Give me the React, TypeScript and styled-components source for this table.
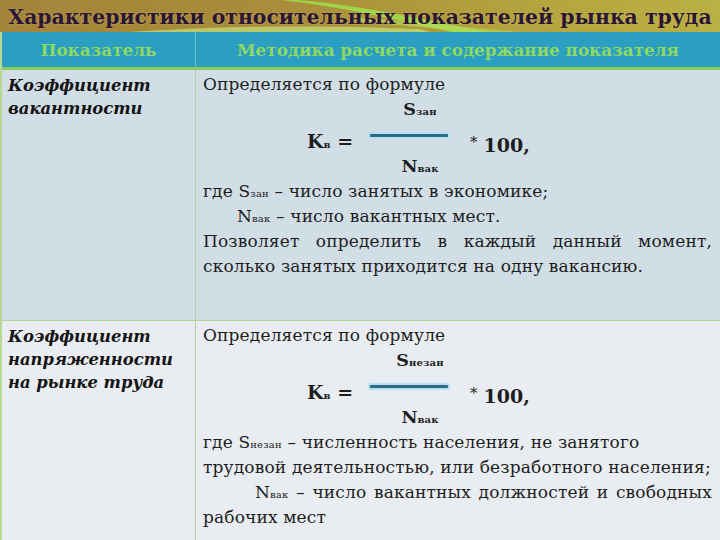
import React from 'react';
import styled, { createGlobalStyle } from 'styled-components';

const GlobalStyle = createGlobalStyle`
  html, body {
    margin: 0;
    padding: 0;
  }
  body {
    width: 720px;
    height: 540px;
    overflow: hidden;
    background: #e9edf1;
  }
`;

const Slide = styled.div`
  width: 720px;
  height: 540px;
  display: flex;
  flex-direction: column;
  font-family: "DejaVu Serif", "Liberation Serif", serif;
  color: #1d1d1d;
`;

const TitleBar = styled.div`
  position: relative;
  flex: none;
  height: 32px;
  display: flex;
  align-items: center;
  justify-content: center;
  overflow: hidden;
  background: linear-gradient(90deg, #a4843a 0%, #aa8d3b 40%, #b3a23d 70%, #bab043 100%);
`;

const Swoosh = styled.svg`
  position: absolute;
  left: 0;
  top: 0;
`;

const Title = styled.h1`
  position: relative;
  margin: 0;
  padding-top: 2px;
  font-size: 20.4px;
  font-weight: bold;
  white-space: nowrap;
  color: #2a1532;
  text-shadow: 0 0 2px rgba(240, 220, 150, 0.5);
`;

const Table = styled.div`
  flex: 1;
  display: flex;
  flex-direction: column;
  border-left: 2px solid #b7da8e;
`;

const HeaderRow = styled.div`
  flex: none;
  height: 38px;
  box-sizing: border-box;
  display: grid;
  grid-template-columns: 193px 1fr;
  background: #2a9fc2;
  border-bottom: 3px solid #8ccb5c;
`;

const HeadCell = styled.div`
  display: flex;
  align-items: center;
  justify-content: center;
  font-size: 16.8px;
  font-weight: bold;
  color: #8fd862;
  white-space: nowrap;
  & + & {
    border-left: 1px solid #6cc0d4;
  }
`;

const Row = styled.div<{ $bg: string; $height?: number }>`
  display: grid;
  grid-template-columns: 193px 1fr;
  box-sizing: border-box;
  background: ${(p) => p.$bg};
  ${(p) => (p.$height ? `height: ${p.$height}px; flex: none;` : 'flex: 1;')}
  border-bottom: 1px solid #b3d58f;
  &:last-child {
    border-bottom: none;
  }
`;

const NameCell = styled.div`
  padding: 4px 6px;
  font-size: 16.4px;
  line-height: 23px;
  font-weight: bold;
  font-style: italic;
  color: #141414;
`;

const TextCell = styled.div`
  padding: 2px 8px 0 7px;
  border-left: 1px solid #b9cfaa;
  font-size: 17px;
  letter-spacing: 0.15px;
  line-height: 25px;
`;

const Line = styled.div<{ $indent?: number; $justify?: boolean }>`
  height: 25px;
  padding-left: ${(p) => p.$indent ?? 0}px;
  text-align: ${(p) => (p.$justify ? 'justify' : 'left')};
  text-align-last: ${(p) => (p.$justify ? 'justify' : 'auto')};
  white-space: ${(p) => (p.$justify ? 'normal' : 'nowrap')};
`;

const Small = styled.span`
  font-size: 10px;
  line-height: 1;
  letter-spacing: 0.2px;
`;

const Formula = styled.div`
  display: flex;
  align-items: center;
  margin-left: 104px;
  font-weight: bold;
  letter-spacing: 0;
`;

const Lhs = styled.div`
  width: 63px;
  font-size: 19px;
  white-space: nowrap;
  padding-top: 6px;
`;

const Fraction = styled.div`
  width: 100px;
  display: flex;
  flex-direction: column;
`;

const Term = styled.div`
  height: 25px;
  text-align: center;
  font-size: 17.5px;
  white-space: nowrap;
`;

const RuleBox = styled.div`
  height: 32px;
  display: flex;
  align-items: flex-start;
  padding-top: 12px;
  box-sizing: border-box;
`;

const Rule = styled.div`
  width: 78px;
  height: 3px;
  background: #2d6c84;
  box-shadow: 0 0 1px 2px #b5e0f0;
  border-radius: 1px;
`;

const Rhs = styled.div`
  font-size: 19px;
  white-space: nowrap;
  padding-top: 12px;
  sup {
    font-size: 15px;
    font-weight: normal;
    vertical-align: 5px;
    margin-right: 6px;
  }
`;

function KFormula({ top }: { top: React.ReactNode }) {
  return (
    <Formula>
      <Lhs>
        K<Small>в</Small> =
      </Lhs>
      <Fraction>
        <Term>{top}</Term>
        <RuleBox>
          <Rule />
        </RuleBox>
        <Term>
          N<Small>вак</Small>
        </Term>
      </Fraction>
      <Rhs>
        <sup>*</sup>100,
      </Rhs>
    </Formula>
  );
}

export default function App() {
  return (
    <>
      <GlobalStyle />
      <Slide>
        <TitleBar>
          <Swoosh width="720" height="32" viewBox="0 0 720 32">
            <path d="M296 0 C350 4 410 16 486 32 L452 32 C398 20 344 7 282 0 Z" fill="#9fe04c" opacity="0.85" />
            <path d="M130 32 C210 27 300 24 420 29 L430 32 Z" fill="#c0e27a" opacity="0.7" />
            <path d="M360 18 C420 22 470 28 520 32 L470 32 C430 28 390 24 360 22 Z" fill="#b6de5a" opacity="0.6" />
          </Swoosh>
          <Title>Характеристики относительных показателей рынка труда</Title>
        </TitleBar>
        <Table>
          <HeaderRow>
            <HeadCell>Показатель</HeadCell>
            <HeadCell>Методика расчета и содержание показателя</HeadCell>
          </HeaderRow>
          <Row $bg="#d2dee6" $height={251}>
            <NameCell>
              Коэффициент
              <br />
              вакантности
            </NameCell>
            <TextCell>
              <Line>Определяется по формуле</Line>
              <KFormula
                top={
                  <>
                    S<Small>зан</Small>
                  </>
                }
              />
              <Line>
                где S<Small>зан</Small> – число занятых в экономике;
              </Line>
              <Line $indent={34}>
                N<Small>вак</Small> – число вакантных мест.
              </Line>
              <Line $justify>Позволяет определить в каждый данный момент,</Line>
              <Line>сколько занятых приходится на одну вакансию.</Line>
            </TextCell>
          </Row>
          <Row $bg="#e9edf1">
            <NameCell>
              Коэффициент
              <br />
              напряженности
              <br />
              на рынке труда
            </NameCell>
            <TextCell>
              <Line>Определяется по формуле</Line>
              <KFormula
                top={
                  <>
                    S<Small>незан</Small>
                  </>
                }
              />
              <Line>
                где S<Small>незан</Small> – численность населения, не занятого
              </Line>
              <Line>трудовой деятельностью, или безработного населения;</Line>
              <Line $indent={52} $justify>
                N<Small>вак</Small> – число вакантных должностей и свободных
              </Line>
              <Line>рабочих мест</Line>
            </TextCell>
          </Row>
        </Table>
      </Slide>
    </>
  );
}
